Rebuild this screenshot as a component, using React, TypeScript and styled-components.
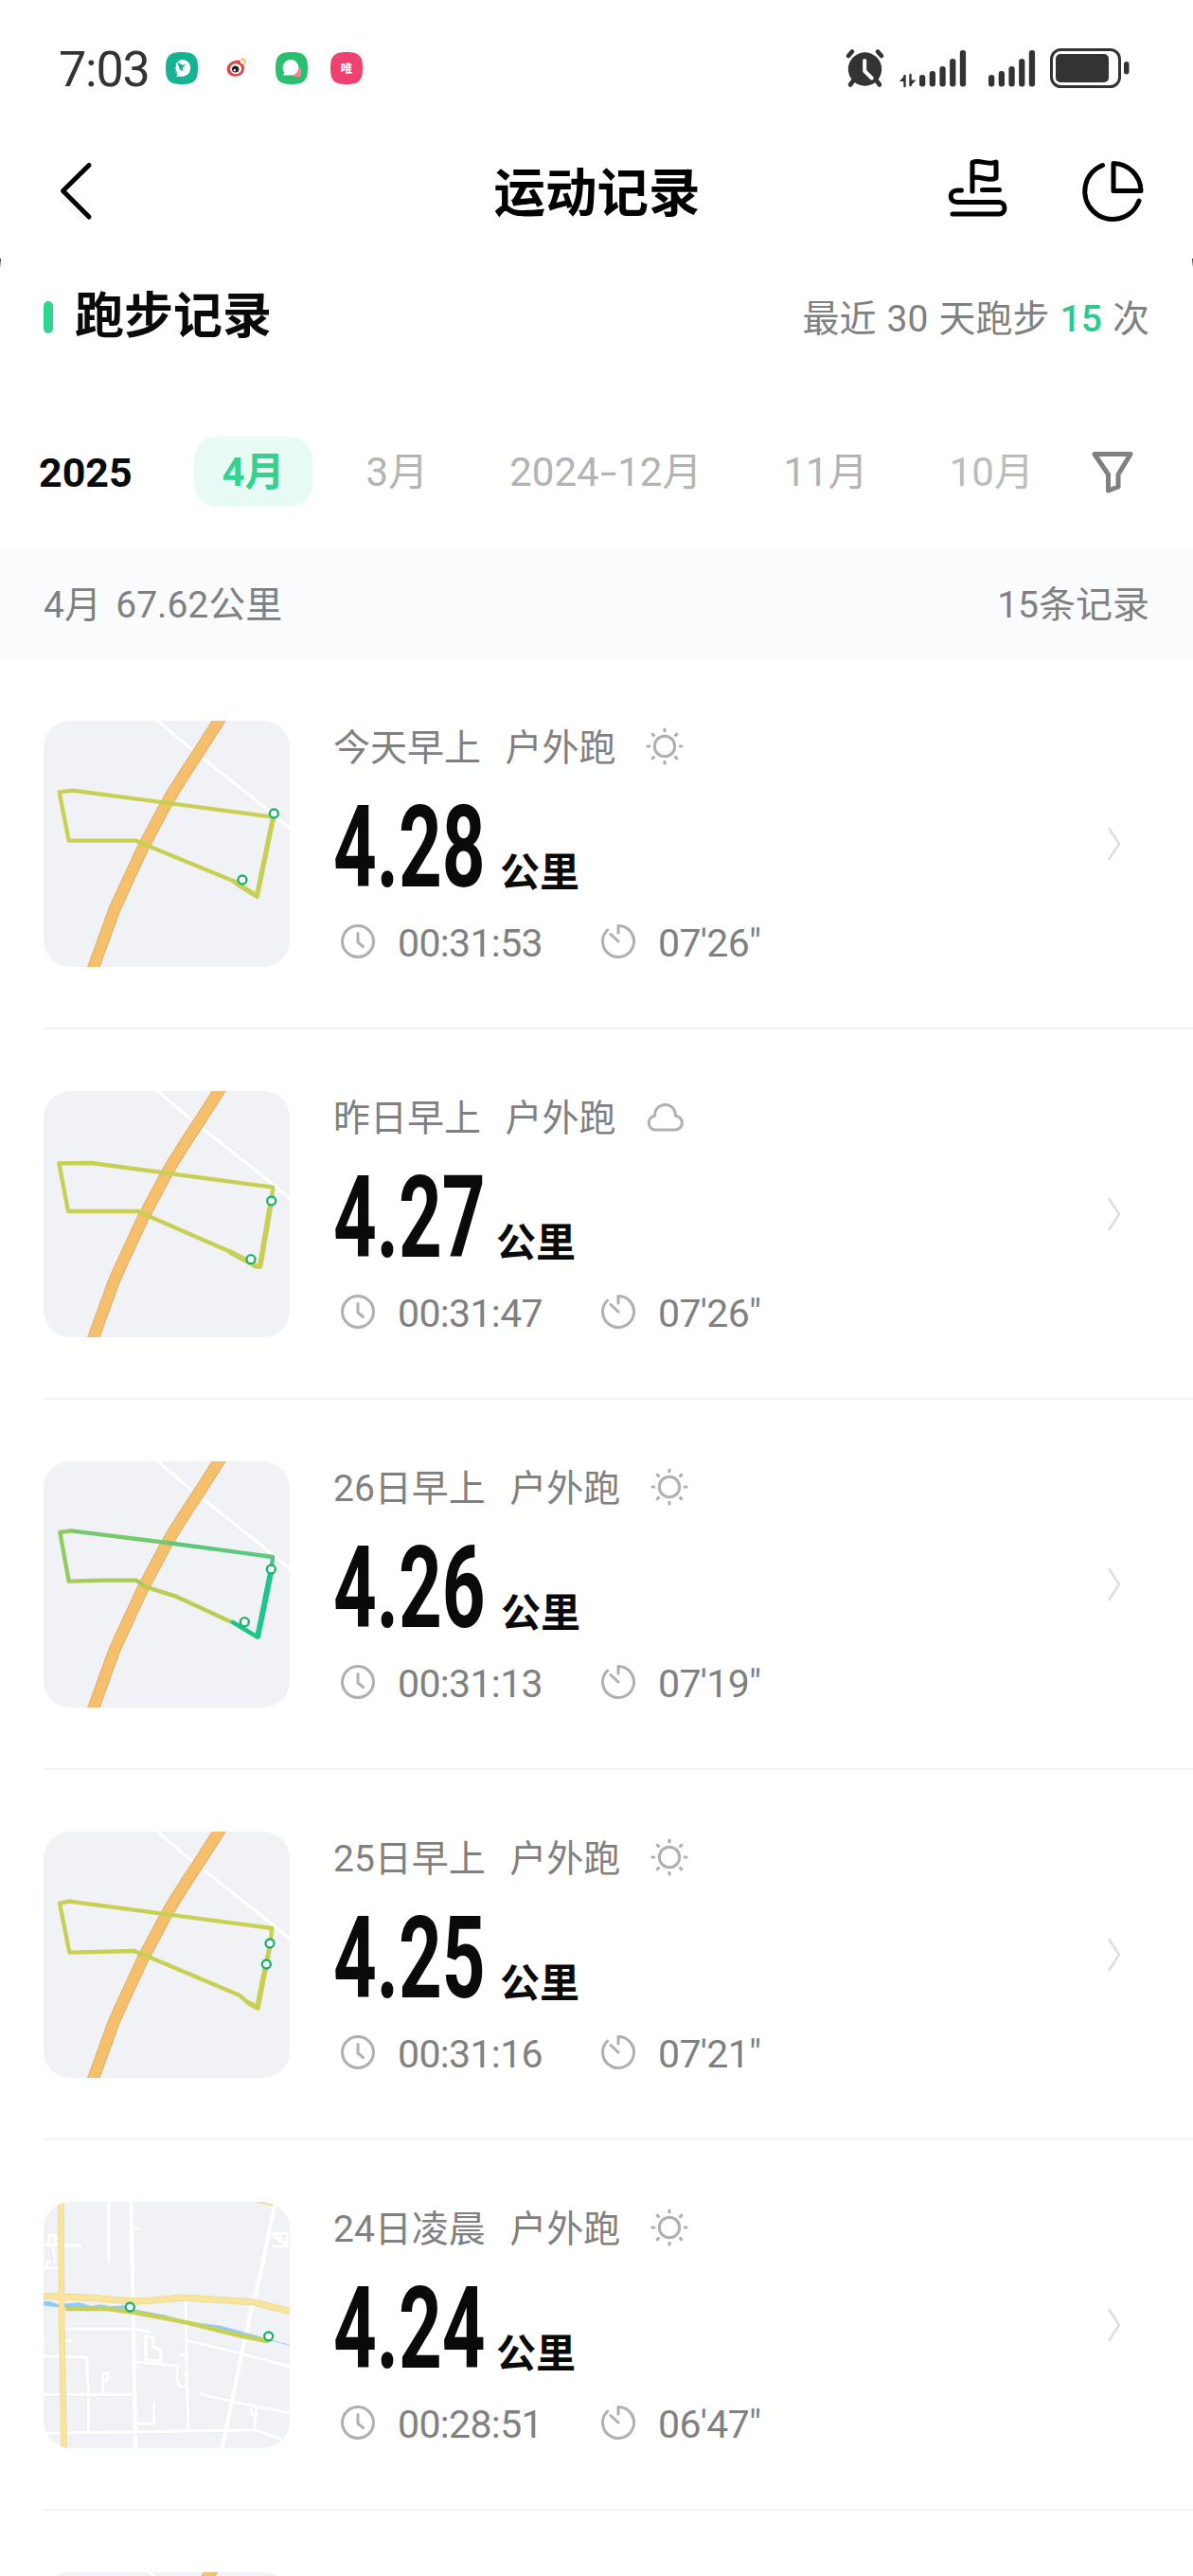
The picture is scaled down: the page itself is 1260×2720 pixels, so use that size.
import React from "react";
import styled, { createGlobalStyle } from "styled-components";

const GlobalStyle = createGlobalStyle`
  *, *::before, *::after { box-sizing: border-box; }
  html, body { margin: 0; padding: 0; background: #fff; }
  body {
    font-family: Roboto, "Noto Sans CJK SC", sans-serif;
    color: #808080;
  }
`;

const Screen = styled.div`
  width: 1260px;
  height: 2720px;
  overflow: hidden;
  background: #fff;
  display: flex;
  flex-direction: column;
`;

const StatusBar = styled.div`
  height: 144px;
  padding: 0 66px 0 62px;
  display: flex;
  align-items: center;
  justify-content: space-between;
  flex: none;
`;

const StatusGroup = styled.div`
  display: flex;
  align-items: center;
`;

const Clock = styled.span`
  width: 113px;
  margin-top: 3px;
  font-size: 52px;
  line-height: 60px;
  letter-spacing: -1.2px;
  color: #333;
  white-space: nowrap;
`;

const AppIcons = styled.div`
  display: flex;
  gap: 24px;
  svg { display: block; }
`;

const NavBar = styled.header`
  height: 129px;
  padding: 0 49px 14px 60px;
  display: grid;
  grid-template-columns: 1fr auto 1fr;
  align-items: center;
  flex: none;
`;

const NavTitle = styled.h1`
  margin: 5px 0 0;
  font-size: 54.5px;
  line-height: 80px;
  font-weight: 700;
  color: #000;
  transform: translateX(-5px);
`;

const NavActions = styled.div`
  display: flex;
  justify-content: flex-end;
  gap: 77px;
  svg { display: block; }
`;

const Sheet = styled.main`
  position: relative;
  display: flex;
  flex-direction: column;
  flex: none;
  &::before, &::after {
    content: "";
    position: absolute;
    top: 0;
    width: 2px;
    height: 10px;
    background: linear-gradient(#333, rgba(120, 120, 120, 0));
  }
  &::before { left: -1px; }
  &::after { right: -1px; }
`;

const SectionHead = styled.div`
  height: 120px;
  padding: 0 46px;
  display: flex;
  align-items: center;
`;

const Accent = styled.i`
  width: 10px;
  height: 34px;
  border-radius: 5px;
  background: #2ed690;
  margin: 3px 23px 0 0;
`;

const SectionTitle = styled.h2`
  margin: 4px 0 0;
  flex: 1;
  font-size: 52px;
  line-height: 76px;
  font-weight: 700;
  color: #0a0a0a;
`;

const Recent = styled.p`
  margin: 7px 0 0;
  font-size: 39px;
  line-height: 60px;
  word-spacing: 1.4px;
  b { font-weight: 500; color: #2bc98a; }
`;

const Tabs = styled.nav`
  height: 186px;
  padding: 26px 60px 0 41px;
  display: flex;
  align-items: center;
  white-space: nowrap;
`;

const Year = styled.strong`
  width: 164px;
  font-size: 43px;
  line-height: 60px;
  color: #0a0a0a;
`;

const Months = styled.div`
  flex: 1;
  display: flex;
  align-items: center;
  gap: 27px;
`;

const Month = styled.span<{ $active?: boolean; $faded?: boolean }>`
  height: 74px;
  margin-top: -2px;
  padding: 1px 29.5px 0;
  border-radius: 24px;
  font-size: 42px;
  line-height: 74px;
  font-weight: ${(p) => (p.$active ? 700 : 400)};
  color: ${(p) => (p.$active ? "#30d391" : p.$faded ? "#bcbcbc" : "#b3b3b3")};
  background: ${(p) => (p.$active ? "#e8faf4" : "transparent")};
`;

const Dash = styled.span`
  display: inline-block;
  margin: 0 4px;
  transform: scaleX(1.5);
`;

const Summary = styled.div`
  height: 117px;
  padding: 3px 46px 0;
  display: flex;
  align-items: center;
  justify-content: space-between;
  background: #fafbfd;
  font-size: 39px;
  line-height: 60px;
  word-spacing: -2px;
  white-space: pre;
`;

const List = styled.ul`
  margin: 0;
  padding: 0 0 0 46px;
  list-style: none;
`;

const Row = styled.li`
  height: 391px;
  padding: 65px 72px 64px 0;
  border-bottom: 2px solid #f3f3f3;
  display: flex;
  align-items: center;
`;

const Thumb = styled.svg`
  width: 260px;
  height: 260px;
  flex: none;
  border-radius: 28px;
  background: #f1f2f6;
`;

const Info = styled.div`
  flex: 1;
  height: 260px;
  margin-left: 46px;
  display: flex;
  flex-direction: column;
`;

const Heading = styled.div`
  flex: none;
  height: 54px;
  display: flex;
  align-items: center;
  gap: 25.5px;
  font-size: 39px;
  line-height: 54px;
  white-space: nowrap;
  span { margin-top: 3px; }
  svg { margin-left: 5px; }
`;

const DistanceLine = styled.div`
  flex: none;
  height: 152px;
  padding-top: 4px;
  display: flex;
  align-items: baseline;
  color: #0a0a0a;
  font-weight: 700;
`;

const Distance = styled.span<{ $width: number }>`
  width: ${(p) => p.$width}px;
  font-size: 121px;
  line-height: 152px;
  white-space: nowrap;
  span {
    display: inline-block;
    transform: scaleX(0.66);
    transform-origin: 0 50%;
  }
`;

const Unit = styled.span`
  margin-left: 18px;
  font-size: 42px;
  line-height: 60px;
  white-space: nowrap;
`;

const Stats = styled.div`
  flex: none;
  height: 54px;
  padding-left: 6px;
  display: flex;
  align-items: center;
  font-size: 41px;
  line-height: 54px;
`;

const Stat = styled.div`
  width: 275px;
  display: flex;
  align-items: center;
  gap: 22px;
  letter-spacing: -0.65px;
  white-space: nowrap;
  span { margin-top: 4px; }
`;

const line = (color: string, width: number) => ({
  fill: "none",
  stroke: color,
  strokeWidth: width,
  strokeLinecap: "round" as const,
  strokeLinejoin: "round" as const,
});

const SQUIRCLE = "M17 0C30 0 34 4 34 17S30 34 17 34 0 30 0 17 4 0 17 0Z";

const StatusApps = () => (
  <AppIcons>
    <svg width="34" height="34">
      <path d={SQUIRCLE} fill="#15b392" />
      <path d="M17.500 8c5 0 8.700 3.800 8.700 8.800s-4 9-8.700 9H11l1.500-2.300A9 9 0 0 1 17.500 8Z" fill="#fff" />
      <path d="M12.500 10c2 1.800 3 2.800 4.800 3.400 2 .4 3.200-.7 5.200-.5-2.300.7-3 1.600-3.900 3-.8 1.500-1 3-.8 4.600-2.600-1-3.900-3-3.700-5.500-1-1.500-1.800-3-1.600-5Z" fill="#15b392" />
      <path d="M10.500 13.500c-1 3-.6 6 1.300 8.300" {...line("#15b392", 1)} />
    </svg>
    <svg width="34" height="34">
      <path d="M16 9c4-1.500 5.500.5 5 2.500 4 .8 4.600 4 3.600 8.200-1 4-5 6-9 6s-9-2.500-9-7.500S11 9.500 16 9Z" fill="#e0464a" />
      <ellipse cx="16" cy="17.700" rx="6" ry="5.500" fill="#fff" />
      <ellipse cx="15.700" cy="18" rx="3.700" ry="3.500" fill="#222" />
      <circle cx="14.800" cy="19.200" r="1.200" fill="#fff" />
      <path d="M22 7.700c2.800-.7 4.300 1 3.600 3.600" {...line("#f2a33a", 1.4)} />
    </svg>
    <svg width="34" height="34">
      <path d={SQUIRCLE} fill="#29c06f" />
      <path d="M25 15.500c2.500 1.500 3 5 1.300 7.500l1 3H21c-3 0-4-2-4-4Z" fill="#f08296" />
      <path d="M16 8a8.200 8.200 0 0 1 0 16.600H8l1.200-3.200A8.500 8.500 0 0 1 16 8Z" fill="#fff" />
    </svg>
    <svg width="34" height="34">
      <path d={SQUIRCLE} fill="#ef4170" />
      <text x="17" y="21.700" fontSize="12.500" fontWeight="700" textAnchor="middle" fill="#fff" fontFamily="Noto Sans CJK SC">唯</text>
    </svg>
  </AppIcons>
);

const BAR_TOPS = [79, 75, 70, 62, 53];

const StatusSystem = () => (
  <svg width="302" height="46" viewBox="892 49 302 46" display="block">
    <g {...line("#333", 4.6)}>
      <path d="M896 59l4-4.500M931 59l-4-4.500M901 85.500l-3 4M926 85.500l3 4" />
    </g>
    <circle cx="913.500" cy="73" r="17.700" fill="#333" />
    <path d="M913.200 64v11l7.500 7.500" {...line("#fff", 4)} />
    <path d="M955.500 80V91M961.500 79V90" {...line("#333", 2.4)} />
    <path d="M950 86l6-7v7ZM961 84.500h6.500l-6.500 7Z" fill="#333" />
    {BAR_TOPS.map((top, i) => (
      <rect key={`a${top}`} x={971 + i * 10.700} y={top} width="6.300" height={91.500 - top} rx="3" fill="#333" />
    ))}
    {BAR_TOPS.map((top, i) => (
      <rect key={`b${top}`} x={1044 + i * 10.700} y={top} width="6.300" height={91.500 - top} rx="3" fill="#333" />
    ))}
    <rect x="1110.500" y="52.500" width="72" height="39" rx="10" fill="none" stroke="#333" strokeWidth="3" />
    <rect x="1115" y="57" width="56" height="30" rx="5" fill="#333" />
    <rect x="1187" y="65" width="5.500" height="13.500" rx="2.700" fill="#333" />
  </svg>
);

const BackIcon = () => (
  <svg width="42" height="64" viewBox="60 170 42 64" display="block">
    <path d="M94 174.500L66.500 201.500L94 229" {...line("#000", 5)} />
  </svg>
);

const RouteIcon = () => (
  <svg width="64" height="64" viewBox="1000 170 64 64">
    <path
      d="M1027 205V174.500C1035 171 1043 178 1052 174V191C1043 195.500 1035 187.500 1027 191M1015.500 204H1011C1002 204 1002 216.500 1011 216.500H1055C1063 216.500 1063 229 1055 229H1006M1037.500 203.500H1055.500"
      {...line("#000", 5)}
    />
  </svg>
);

const PieIcon = () => (
  <svg width="70" height="70" viewBox="1140 167 70 70">
    <path
      d="M1163.500 174.500A29.500 29.500 0 1 0 1202 212M1175 172.500V201.500H1204A29.500 29.500 0 0 0 1175 172.500Z"
      {...line("#000", 5)}
    />
  </svg>
);

const FilterIcon = () => (
  <svg width="50" height="50" viewBox="1150 473 50 50" display="block">
    <path d="M1156 478.500H1194L1181 500V513L1170.500 517V500Z" {...line("#808080", 5)} />
  </svg>
);

const SunIcon = () => (
  <svg width="42" height="42" viewBox="-21 -21 42 42">
    <circle r="10.700" {...line("#b0b0b0", 3)} />
    {[0, 45, 90, 135, 180, 225, 270, 315].map((a) => (
      <path key={a} d="M16.300 0H18" transform={`rotate(${a})`} {...line("#b0b0b0", 3.2)} />
    ))}
  </svg>
);

const CloudIcon = () => (
  <svg width="42" height="42" viewBox="-21 -21 42 42">
    <path d="M-10.500 14A7.500 7.500 0 0 1-10.500-.8C-10.500-16 11-17 11.500-.8A7.400 7.400 0 0 1 10.500 14Z" {...line("#b0b0b0", 3)} />
  </svg>
);

const TimeIcon = () => (
  <svg width="40" height="40" viewBox="-20 -20 40 40">
    <circle r="16.500" {...line("#b0b0b0", 3)} />
    <path d="M0-8.500V1L5.500 5.500" {...line("#b0b0b0", 3)} />
  </svg>
);

const PaceIcon = () => (
  <svg width="40" height="40" viewBox="-20 -20 40 40">
    <path d="M0-9V-16.500A16.500 16.500 0 1 1-11.300-12M0 0L-8-7.500" {...line("#b0b0b0", 3)} />
  </svg>
);

const ArrowIcon = () => (
  <svg width="24" height="44" viewBox="0 0 24 44">
    <path d="M7.500 6L18 22L7.500 38" {...line("#dedede", 2.600)} />
  </svg>
);

type Leg = { d: string; color: string; width?: number };
type Route = { legs: Leg[]; pins: [number, number][] };

const OLIVE = "#c7d053";

const Pins = ({ pins }: { pins: [number, number][] }) => (
  <>
    {pins.map(([x, y]) => (
      <circle key={`${x}-${y}`} cx={x} cy={y} r="13.500" fill="#fff" stroke="#1bb26e" strokeWidth="7" />
    ))}
  </>
);

const ROAD = "M610 -10L545 92L500 160Q475 200 457 228L436 265L365 398L290 560L272 600L203 790";

const ParkMap = ({ route, shift = 0 }: { route?: Route; shift?: number }) => (
  <Thumb viewBox={`${shift} 0 780 780`}>
    <g transform="translate(-48 0)">
      <path d="M400 -8L522 95L727 257L840 350" {...line("#e6e7eb", 15)} />
      <path d="M400 -8L522 95L727 257L840 350" {...line("#fff", 12)} />
      <path d={ROAD} {...line("#d9a863", 38)} />
      <path d={ROAD} {...line("#f5bf6b", 33)} />
      {route?.legs.map((leg) => (
        <path key={leg.d} d={leg.d} {...line(leg.color, leg.width ?? 13)} />
      ))}
      {route && <Pins pins={route.pins} />}
    </g>
  </Thumb>
);

const WHITE_ROADS = [
  "M255 -6V190",
  "M325 -6L333 400L340 790",
  "M336 84H350",
  "M48 136H95M112 138H163V147M78 136L84 190M66 140V105H84V130M60 210V188L68 192M48 210H95",
  "M112 402H335L385 412",
  "M112 440H138",
  "M48 488L186 492V545L191 610V725",
  "M48 610H330M236 605V542H251V566H238M210 610V615",
  "M48 733L340 728L625 724L715 722L800 750",
  "M372 500V425L396 430V460L420 468V505L375 500",
  "M342 507L474 520L470 555L478 585H500",
  "M498 310L502 560L507 722M480 485H500M495 550H502",
  "M345 702H398V635",
  "M505 440L680 482L830 522",
  "M545 605L560 613L645 632L830 669",
  "M780 10L735 230L700 370L670 510L645 632L612 790",
  "M772 100H820V140H775M795 100L815 140M770 100L800 125",
  "M722 655L715 722M706 655V675H722",
];

const RiverMap = () => (
  <Thumb viewBox="48 0 780 780">
    {WHITE_ROADS.map((d) => (
      <path key={`${d}e`} d={d} {...line("#e5e6ea", 13)} />
    ))}
    {WHITE_ROADS.map((d) => (
      <path key={d} d={d} {...line("#fff", 10.500)} />
    ))}
    <path d="M325 -6L333 400L340 790M780 10L735 230L700 370L670 510L645 632L612 790" {...line("#fff", 13)} />
    <path d="M46 316L65 314L95 324L160 318L200 330L230 325L260 331L310 327L340 341L430 358L500 378L610 392L740 428L740 440L500 385L330 346L110 336L46 328Z" fill="#92cbf7" />
    <path d="M740 432L830 454" {...line("#a9d3f5", 3.500)} />
    <path d="M720 -2L772 10" {...line("#eedb98", 5)} />
    <path d="M44 298L200 304L330 315L385 313L490 303L710 317L835 348" {...line("#e6cf88", 21)} />
    <path d="M103 -6L106 400L113 790" {...line("#e6cf88", 19)} />
    <path d="M44 298L200 304L330 315L385 313L490 303L710 317L835 348" {...line("#f8e59b", 18)} />
    <path d="M103 -6L106 400L113 790" {...line("#f8e59b", 16)} />
    <path d="M118 339H250L330 349L400 362L500 382L680 426L760 442" {...line(OLIVE, 14)} strokeLinecap="butt" />
    <Pins pins={[[322, 333], [761, 426]]} />
  </Thumb>
);

const ROUTES: Route[] = [
  {
    legs: [
      { d: "M768 304L140 221L98 226L128 380H342L380 397L655 510", color: OLIVE },
      { d: "M655 512L724 556L775 310", color: OLIVE, width: 16 },
    ],
    pins: [[678, 504], [778, 294]],
  },
  {
    legs: [
      { d: "M770 350L775 305L200 228L97 229L126 381H347L382 397L640 509", color: OLIVE },
      { d: "M640 510L722 555H734L768 355", color: OLIVE, width: 17 },
    ],
    pins: [[705, 533], [770, 348]],
  },
  {
    legs: [
      { d: "M770 342L774 303", color: "#45c981" },
      { d: "M774 303L440 258", color: "#5bc97b" },
      { d: "M440 258L135 220", color: "#74ca6c" },
      { d: "M135 220L100 225L128 380", color: "#92ca5f" },
      { d: "M128 380L240 377H342L372 398", color: "#a8cb58" },
      { d: "M372 398L465 427L640 508", color: "#bdcc52" },
      { d: "M648 510L724 556", color: "#1fc58a", width: 14 },
      { d: "M727 554L768 352", color: "#1fc58a", width: 18 },
    ],
    pins: [[685, 509], [769, 342]],
  },
  {
    legs: [
      { d: "M766 354L772 306L130 221L99 227L130 383L335 378L385 398L670 519L695 542L724 556", color: OLIVE },
      { d: "M700 544L726 558L752 425", color: OLIVE, width: 17 },
      { d: "M752 425L766 360", color: OLIVE, width: 15 },
    ],
    pins: [[765, 354], [754, 420]],
  },
];

type RunRecord = {
  when: string;
  weather: "sun" | "cloud";
  km: string;
  kmWidth: number;
  duration: string;
  pace: string;
};

const RECORDS: RunRecord[] = [
  { when: "今天早上", weather: "sun", km: "4.28", kmWidth: 158, duration: "00:31:53", pace: "07'26\"" },
  { when: "昨日早上", weather: "cloud", km: "4.27", kmWidth: 154, duration: "00:31:47", pace: "07'26\"" },
  { when: "26日早上", weather: "sun", km: "4.26", kmWidth: 159, duration: "00:31:13", pace: "07'19\"" },
  { when: "25日早上", weather: "sun", km: "4.25", kmWidth: 158, duration: "00:31:16", pace: "07'21\"" },
  { when: "24日凌晨", weather: "sun", km: "4.24", kmWidth: 154, duration: "00:28:51", pace: "06'47\"" },
];

const RecordRow = ({ record, route }: { record: RunRecord; route?: Route }) => (
  <Row>
    {route ? <ParkMap route={route} /> : <RiverMap />}
    <Info>
      <Heading>
        <span>{record.when}</span>
        <span>户外跑</span>
        {record.weather === "sun" ? <SunIcon /> : <CloudIcon />}
      </Heading>
      <DistanceLine>
        <Distance $width={record.kmWidth}>
          <span>{record.km}</span>
        </Distance>
        <Unit>公里</Unit>
      </DistanceLine>
      <Stats>
        <Stat>
          <TimeIcon />
          <span>{record.duration}</span>
        </Stat>
        <Stat>
          <PaceIcon />
          <span>{record.pace}</span>
        </Stat>
      </Stats>
    </Info>
    <ArrowIcon />
  </Row>
);

export default function App() {
  return (
    <>
      <GlobalStyle />
      <Screen>
        <StatusBar>
          <StatusGroup>
            <Clock>7:03</Clock>
            <StatusApps />
          </StatusGroup>
          <StatusSystem />
        </StatusBar>
        <NavBar>
          <BackIcon />
          <NavTitle>运动记录</NavTitle>
          <NavActions>
            <RouteIcon />
            <PieIcon />
          </NavActions>
        </NavBar>
        <Sheet>
          <SectionHead>
            <Accent />
            <SectionTitle>跑步记录</SectionTitle>
            <Recent>
              最近 30 天跑步 <b>15</b> 次
            </Recent>
          </SectionHead>
          <Tabs>
            <Year>2025</Year>
            <Months>
              <Month $active>4月</Month>
              <Month>3月</Month>
              <Month>
                2024<Dash>-</Dash>12月
              </Month>
              <Month>11月</Month>
              <Month $faded>10月</Month>
            </Months>
            <FilterIcon />
          </Tabs>
          <Summary>
            <span>4月  67.62公里</span>
            <span>15条记录</span>
          </Summary>
          <List>
            {RECORDS.map((record, i) => (
              <RecordRow key={record.when} record={record} route={ROUTES[i]} />
            ))}
            <Row>
              <ParkMap shift={26} />
            </Row>
          </List>
        </Sheet>
      </Screen>
    </>
  );
}
